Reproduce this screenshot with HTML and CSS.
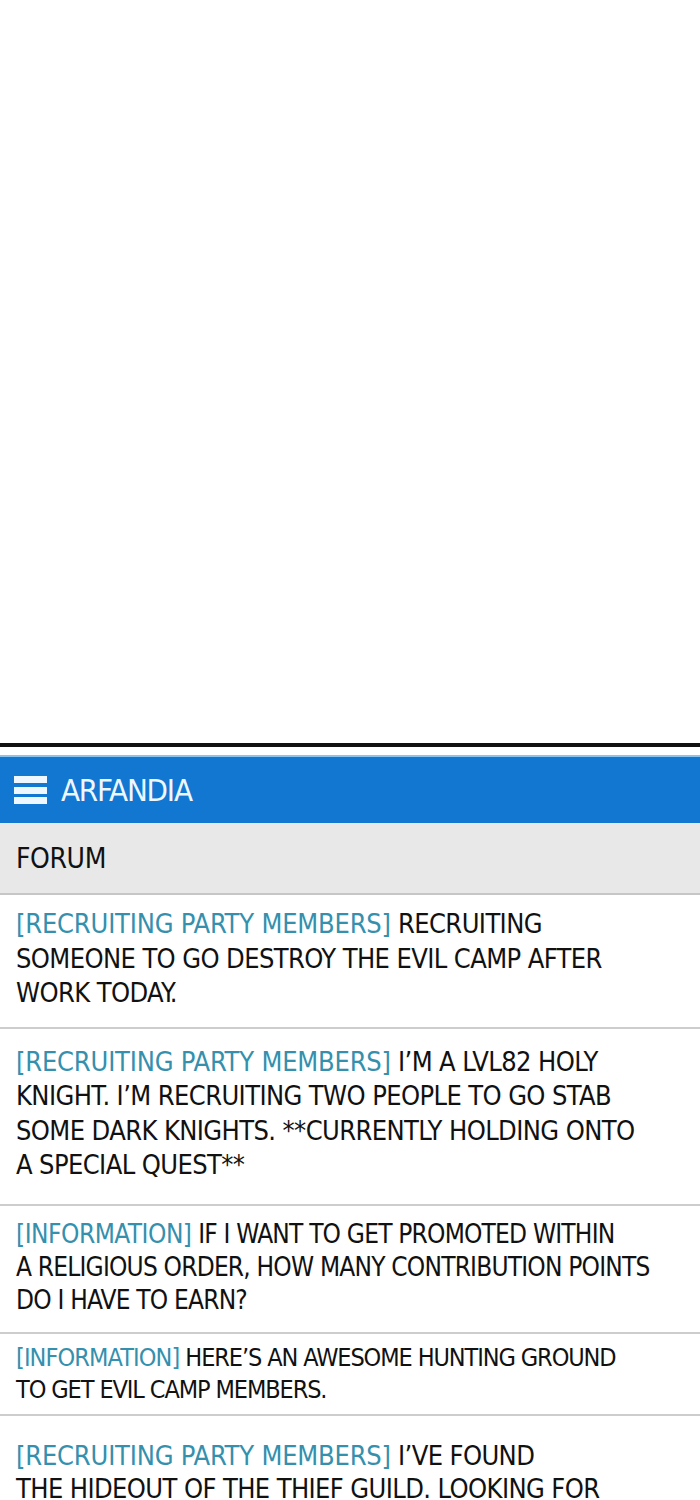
FILE: index.html
```html
<!DOCTYPE html>
<html>
<head>
    <title>Arfandia Forum</title>
    <link rel="stylesheet" href="styles.css">
</head>
<body>
    <div class="blank"></div>
    <div class="rule"></div>

    <div class="appbar">
        <svg class="menu-icon" width="33" height="28" viewBox="0 0 33 28">
            <rect x="0" y="0" width="33" height="7" fill="#eef7ff"/>
            <rect x="0" y="11" width="33" height="7" fill="#eef7ff"/>
            <rect x="0" y="21" width="33" height="7" fill="#eef7ff"/>
        </svg>
        <span class="title">ARFANDIA</span>
    </div>

    <div class="section">FORUM</div>

    <ul class="posts">
        <li class="post p1"><span class="tag">[RECRUITING PARTY MEMBERS]</span> RECRUITING<br>SOMEONE TO GO DESTROY THE EVIL CAMP AFTER<br>WORK TODAY.</li>
        <li class="post p2"><span class="tag">[RECRUITING PARTY MEMBERS]</span> I’M A LVL82 HOLY<br>KNIGHT. I’M RECRUITING TWO PEOPLE TO GO STAB<br>SOME DARK KNIGHTS. **CURRENTLY HOLDING ONTO<br>A SPECIAL QUEST**</li>
        <li class="post p3"><span class="tag">[INFORMATION]</span> IF I WANT TO GET PROMOTED WITHIN<br>A RELIGIOUS ORDER, HOW MANY CONTRIBUTION POINTS<br>DO I HAVE TO EARN?</li>
        <li class="post p4"><span class="tag">[INFORMATION]</span> HERE’S AN AWESOME HUNTING GROUND<br>TO GET EVIL CAMP MEMBERS.</li>
        <li class="post p5"><span class="tag">[RECRUITING PARTY MEMBERS]</span> I’VE FOUND<br>THE HIDEOUT OF THE THIEF GUILD. LOOKING FOR</li>
    </ul>
</body>
</html>
```

FILE: styles.css
```css
body {
    margin: 0;
    background: #fff;
    font-family: "DejaVu Sans Condensed", "DejaVu Sans", sans-serif;
    color: #111;
}
.blank { height: 743px; }
.rule { height: 4px; background: #111; margin-bottom: 8px; }

.appbar {
    display: flex;
    align-items: center;
    gap: 14px;
    height: 68px;
    padding-left: 14px;
    background: #1177d0;
    border-top: 2px solid #8cc2ee;
    box-sizing: border-box;
}
.menu-icon { display: block; }
.title {
    color: #eef7ff;
    font-size: 31px;
    line-height: 1;
    letter-spacing: -1.2px;
}

.section {
    height: 70px;
    display: flex;
    align-items: center;
    padding-left: 16px;
    background: #e8e8e8;
    border-bottom: 2px solid #c6c6c6;
    font-size: 28px;
    letter-spacing: -0.4px;
    color: #111;
}

.posts { list-style: none; margin: 0; padding: 0; }
.post {
    padding: 12px 16px 16px;
    font-size: 27px;
    line-height: 34.5px;
    letter-spacing: -0.6px;
    white-space: nowrap;
    border-bottom: 2px solid #cdcdcd;
}
.tag { color: #3590ad; letter-spacing: -0.2px; }
.p2 { padding-top: 16px; padding-bottom: 21px; }
.p3 { padding-top: 12px; padding-bottom: 15px; font-size: 26px; line-height: 33px; letter-spacing: -0.8px; }
.p3 .tag { letter-spacing: -0.5px; }
.p4 { padding-top: 8px; padding-bottom: 8px; font-size: 25px; line-height: 32px; letter-spacing: -1.1px; }
.p4 .tag { letter-spacing: -0.9px; }
.p5 { padding-top: 23px; line-height: 33px; border-bottom: none; }
```
